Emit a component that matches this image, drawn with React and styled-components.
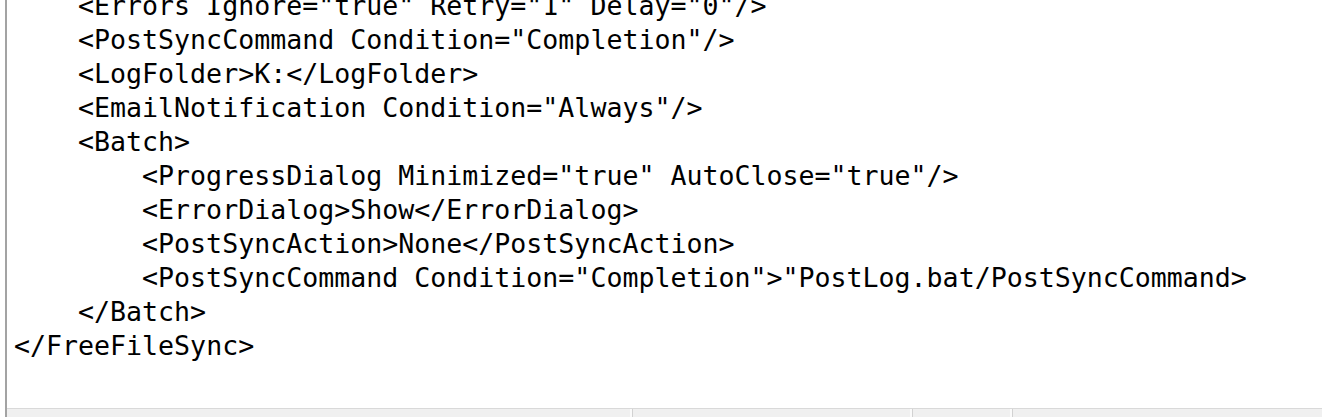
import React from "react";
import styled, { createGlobalStyle } from "styled-components";

const lines = [
  { indent: 1, text: '<Errors Ignore="true" Retry="1" Delay="0"/>' },
  { indent: 1, text: '<PostSyncCommand Condition="Completion"/>' },
  { indent: 1, text: "<LogFolder>K:</LogFolder>" },
  { indent: 1, text: '<EmailNotification Condition="Always"/>' },
  { indent: 1, text: "<Batch>" },
  { indent: 2, text: '<ProgressDialog Minimized="true" AutoClose="true"/>' },
  { indent: 2, text: "<ErrorDialog>Show</ErrorDialog>" },
  { indent: 2, text: "<PostSyncAction>None</PostSyncAction>" },
  {
    indent: 2,
    text: '<PostSyncCommand Condition="Completion">"PostLog.bat/PostSyncCommand>',
  },
  { indent: 1, text: "</Batch>" },
  { indent: 0, text: "</FreeFileSync>" },
];

const App = () => {
  return (
    <>
      <GlobalStyle />
      <Window>
        <Editor>
          <Text>
            {lines.map((line, i) => (
              <Line key={i} $indent={line.indent}>
                {line.text}
              </Line>
            ))}
          </Text>
        </Editor>
        <StatusBar>
          <Pane />
          <Pane />
          <Pane />
          <Pane />
        </StatusBar>
      </Window>
    </>
  );
};

export default App;

const GlobalStyle = createGlobalStyle`
  html, body {
    margin: 0;
    padding: 0;
    background: #ffffff;
    overflow: hidden;
  }
`;

const Window = styled.div`
  display: flex;
  flex-direction: column;
  width: 1317px;
  height: 417px;
  margin-left: 5px;
  border-left: 2px solid #a3a3a3;
  background: #ffffff;
`;

const Editor = styled.div`
  flex: 1;
  overflow: hidden;
  padding-left: 7px;
`;

const Text = styled.div`
  margin-top: -11px;
  font-family: "DejaVu Sans Mono", "Liberation Mono", monospace;
  font-size: 26.6px;
  line-height: 34px;
  color: #000000;
  white-space: pre;
`;

const Line = styled.div`
  padding-left: ${(props) => props.$indent * 4}ch;
`;

const StatusBar = styled.div`
  display: grid;
  grid-template-columns: 626px 280px 100px 1fr;
  height: 8px;
  border-top: 1px solid #d9d9d9;
  background: #f0f0f0;
`;

const Pane = styled.div`
  border-right: 1px solid #d2d2d2;
  box-shadow: inset -2px 0 0 #fafafa;

  &:last-child {
    border-right: none;
    box-shadow: none;
  }
`;
